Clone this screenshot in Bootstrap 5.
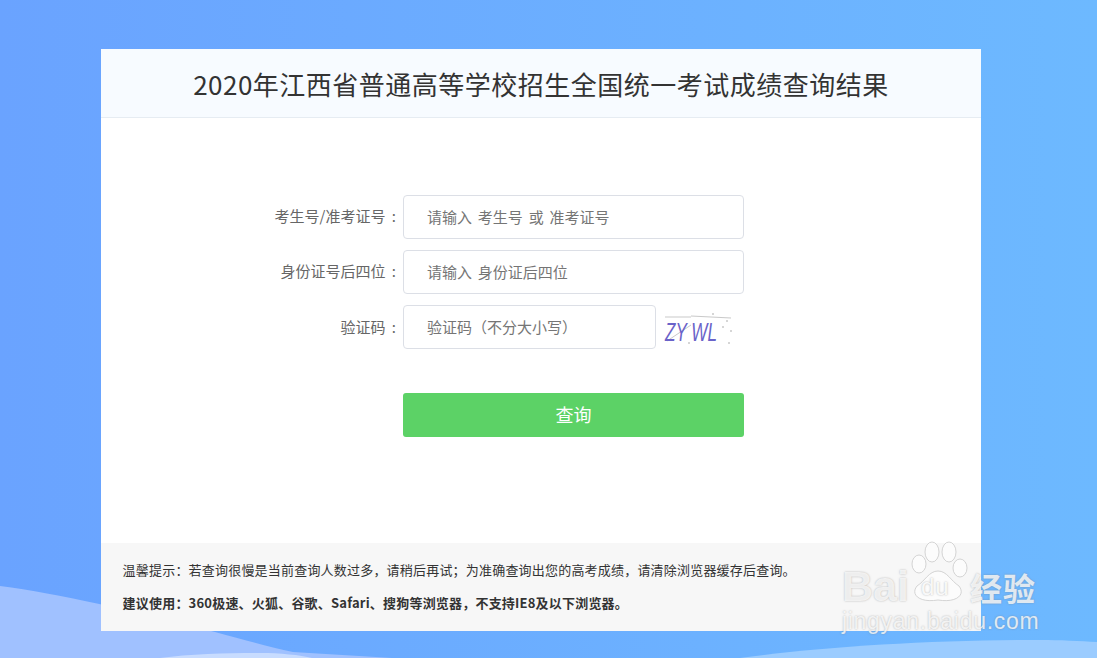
<!DOCTYPE html>
<html lang="zh-CN">
<head>
<meta charset="utf-8">
<title>成绩查询</title>
<link rel="stylesheet" href="https://cdn.jsdelivr.net/npm/bootstrap@5.3.0/dist/css/bootstrap.min.css">
<style>
html,body{height:100%;}
body{margin:0;overflow:hidden;font-family:"Noto Sans CJK SC","Liberation Sans",sans-serif;background:linear-gradient(90deg,#6aa3ff 0%,#6db9ff 100%);position:relative;}
.bg-waves{position:absolute;left:0;top:0;width:1097px;height:658px;}
.stage{position:relative;padding-top:49px;width:880px;margin-left:101px;}
.panel{background:#fff;height:582px;}
.panel-head{height:69px;background:#f7fbff;border-bottom:1px solid #e6ecf2;font-size:26px;letter-spacing:.5px;color:#333;line-height:70px;text-align:center;}
.form-zone{padding-top:77px;height:425px;}
.field-row{height:44px;margin-bottom:11px;}
.field-label{width:302px;padding-right:7px;text-align:right;font-size:15px;word-spacing:3px;color:#666;line-height:42px;white-space:nowrap;}
.field-input{width:341px;height:44px;border:1px solid #dcdfe6;border-radius:4px;padding:0 24px 2px 23px;font-size:15px;word-spacing:2.5px;color:#606266;background:#fff;}
.field-input::placeholder{color:#757575;opacity:1;}
.field-short{width:253px;}
.captcha{width:76px;height:44px;margin-left:5px;overflow:visible;}
.go-row{padding-left:302px;padding-top:33px;}
.go-btn{width:341px;height:44px;background:#5cd266;border:0;border-radius:3px;color:#fff;font-size:18px;padding:0 0 2px;}
.tips{height:88px;background:#f7f7f7;padding:17px 21px 0 22px;font-size:13px;letter-spacing:.2px;color:#333;}
.tips p{margin:0;line-height:20px;white-space:nowrap;margin-left:-.4px;}
.tips p+p{margin-top:13px;font-weight:700;}
.wm{position:absolute;left:843px;top:540px;width:200px;height:94px;pointer-events:none;color:rgba(255,255,255,.78);text-shadow:0 0 2px rgba(120,120,120,.55);}
.wm-name{position:absolute;left:-1px;top:24px;font:700 43px/44px "Liberation Sans",sans-serif;}
.wm-name2{position:absolute;left:78px;top:35px;font:400 24px/24px "Liberation Sans",sans-serif;letter-spacing:1px;color:rgba(255,255,255,.9);}
.wm-cn{position:absolute;left:127px;top:27px;font-size:32px;line-height:40px;font-weight:700;letter-spacing:1px;white-space:nowrap;}
.wm-url{position:absolute;left:-1px;top:69px;font:400 23px/24px "Liberation Sans",sans-serif;letter-spacing:.7px;white-space:nowrap;}
.wm-paw{position:absolute;left:65px;top:3px;width:60px;height:60px;overflow:visible;}
</style>
</head>
<body>
<svg class="bg-waves" viewBox="0 0 1097 658" aria-hidden="true">
<path d="M0 586C60 594 130 610 215 632C245 640 270 647 293 652C325 654 360 656 392 658H0Z" fill="#a0c1ff"/>
<path d="M160 658C190 654 230 653 260 653C280 653 300 655 312 658Z" fill="#c8dcff"/>
<path d="M740 658C820 647 930 640 1040 640C1060 640 1080 641 1097 642V658Z" fill="#9bccff"/>
</svg>
<div class="stage">
<div class="panel d-flex flex-column">
<div class="panel-head">2020年江西省普通高等学校招生全国统一考试成绩查询结果</div>
<div class="form-zone">
<div class="field-row d-flex"><div class="field-label">考生号/准考证号 :</div><input class="field-input" placeholder="请输入 考生号 或 准考证号"></div>
<div class="field-row d-flex"><div class="field-label">身份证号后四位 :</div><input class="field-input" placeholder="请输入 身份证后四位"></div>
<div class="field-row d-flex align-items-center"><div class="field-label">验证码 :</div><input class="field-input field-short" placeholder="验证码（不分大小写）">
<svg class="captcha" viewBox="0 0 76 44" aria-label="验证码">
<path d="M4 12H30M30 11L70 13M6 36L30 20" stroke="#c9c9c9" stroke-width="1" fill="none"/>
<text x="4" y="36" font-family="Liberation Sans" font-style="italic" font-size="25" fill="#6a63c9" textLength="52" lengthAdjust="spacingAndGlyphs">ZY WL</text>
<g fill="#c8c8c8"><circle cx="52" cy="9" r="1"/><circle cx="66" cy="16" r="1"/><circle cx="70" cy="26" r="1"/><circle cx="62" cy="22" r="1"/><circle cx="28" cy="38" r="1"/><circle cx="68" cy="38" r="1"/></g>
</svg></div>
<div class="go-row"><button class="btn go-btn" type="button">查询</button></div>
</div>
<div class="tips">
<p>温馨提示：若查询很慢是当前查询人数过多，请稍后再试；为准确查询出您的高考成绩，请清除浏览器缓存后查询。</p>
<p>建议使用：360极速、火狐、谷歌、Safari、搜狗等浏览器，不支持IE8及以下浏览器。</p>
</div>
</div>
</div>
<div class="wm">
<span class="wm-name">Bai</span>
<svg class="wm-paw" viewBox="0 0 60 60" aria-hidden="true"><g fill="rgba(255,255,255,.6)" stroke="rgba(205,205,205,.85)" stroke-width="1"><ellipse cx="11" cy="21" rx="7" ry="9"/><ellipse cx="24" cy="9" rx="7" ry="10"/><ellipse cx="41" cy="9" rx="7" ry="10"/><ellipse cx="52" cy="25" rx="7" ry="9"/><path d="M30 28C39 28 43 38 51 43C58 52 48 60 30 57C12 60 2 52 9 43C17 38 21 28 30 28Z"/></g></svg>
<span class="wm-name2">du</span>
<span class="wm-cn">经验</span>
<span class="wm-url">jingyan.baidu.com</span>
</div>
<script src="https://cdn.jsdelivr.net/npm/bootstrap@5.3.0/dist/js/bootstrap.bundle.min.js"></script>
</body>
</html>
